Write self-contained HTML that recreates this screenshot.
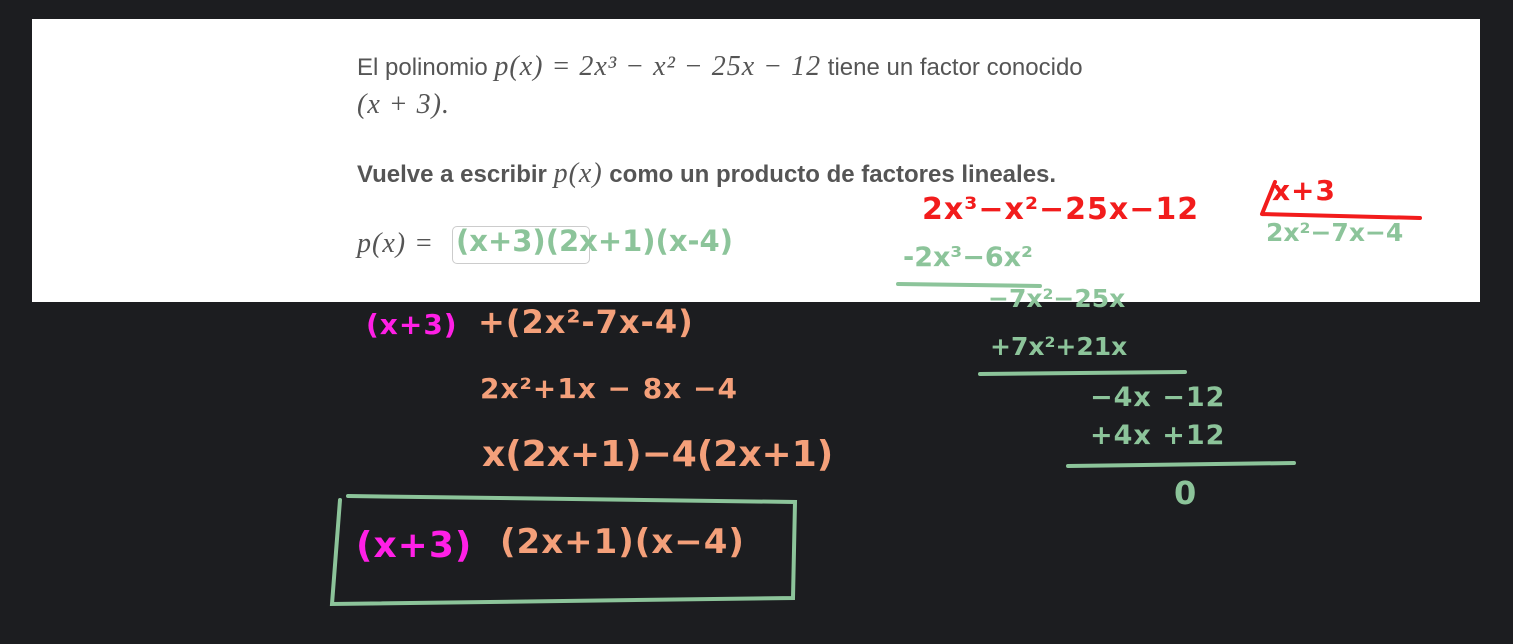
<!DOCTYPE html>
<html><head><meta charset="utf-8"><style>
body{margin:0;width:1513px;height:644px;background:#1c1d20;position:relative;overflow:hidden;font-family:"Liberation Sans",sans-serif}
#card{position:absolute;left:32px;top:19px;width:1448px;height:283px;background:#fff}
.t{position:absolute;color:#555;font-size:24px;white-space:nowrap}
.m{font-family:"Liberation Serif",serif;font-style:italic;font-size:28px;letter-spacing:1px}
.h{position:absolute;white-space:nowrap;font-family:"DejaVu Sans",sans-serif;letter-spacing:1px;font-weight:bold}
.g{color:#8cc49a}.p{color:#ff1fe6}.o{color:#f4a07a}.r{color:#f21c1c}
</style></head><body>
<div id="card"></div>
<div class="t" style="left:357px;top:51px">El polinomio <span class="m">p(x) = 2x³ − x² − 25x − 12</span> tiene un factor conocido</div>
<div class="t" style="left:357px;top:89px"><span class="m">(x + 3).</span></div>
<div class="t" style="left:357px;top:158px;font-weight:bold">Vuelve a escribir <span class="m" style="font-weight:normal">p(x)</span> como un producto de factores lineales.</div>
<div class="t" style="left:357px;top:228px"><span class="m">p(x) =</span></div>
<div style="position:absolute;left:452px;top:226px;width:136px;height:36px;border:1px solid #ccc;border-radius:5px"></div>
<div class="h g" style="left:456px;top:224px;font-size:29px;letter-spacing:0">(x+3)(2x+1)(x-4)</div>
<div class="h p" style="left:366px;top:308px;font-size:28px">(x+3)</div>
<div class="h o" style="left:478px;top:303px;font-size:32px">+(2x²-7x-4)</div>
<div class="h o" style="left:480px;top:372px;font-size:28px">2x²+1x − 8x −4</div>
<div class="h o" style="left:482px;top:434px;font-size:36px;letter-spacing:0">x(2x+1)−4(2x+1)</div>
<div class="h p" style="left:356px;top:525px;font-size:36px">(x+3)</div>
<div class="h o" style="left:500px;top:522px;font-size:34px">(2x+1)(x−4)</div>
<div class="h r" style="left:922px;top:192px;font-size:30px">2x³−x²−25x−12</div>
<div class="h r" style="left:1272px;top:174px;font-size:28px">x+3</div>
<div class="h g" style="left:1266px;top:218px;font-size:25px;letter-spacing:0">2x²−7x−4</div>
<div class="h g" style="left:903px;top:242px;font-size:27px;letter-spacing:0">-2x³−6x²</div>
<div class="h g" style="left:988px;top:284px;font-size:25px;letter-spacing:0">−7x²−25x</div>
<div class="h g" style="left:990px;top:332px;font-size:25px;letter-spacing:0">+7x²+21x</div>
<div class="h g" style="left:1090px;top:382px;font-size:27px">−4x −12</div>
<div class="h g" style="left:1090px;top:420px;font-size:27px">+4x +12</div>
<div class="h g" style="left:1174px;top:474px;font-size:32px">0</div>
<svg width="1513" height="644" style="position:absolute;left:0;top:0" fill="none" stroke-linecap="round">
<path d="M1262 214 L1275 182 M1262 214 L1420 218" stroke="#f21c1c" stroke-width="4"/>
<path d="M898 284 L1040 286 M980 374 L1185 372 M1068 466 L1294 463" stroke="#8cc49a" stroke-width="4"/>
<path d="M348 496 L795 502 L793 598 L332 604 L340 500" stroke="#8cc49a" stroke-width="4"/>
</svg>
</body></html>
